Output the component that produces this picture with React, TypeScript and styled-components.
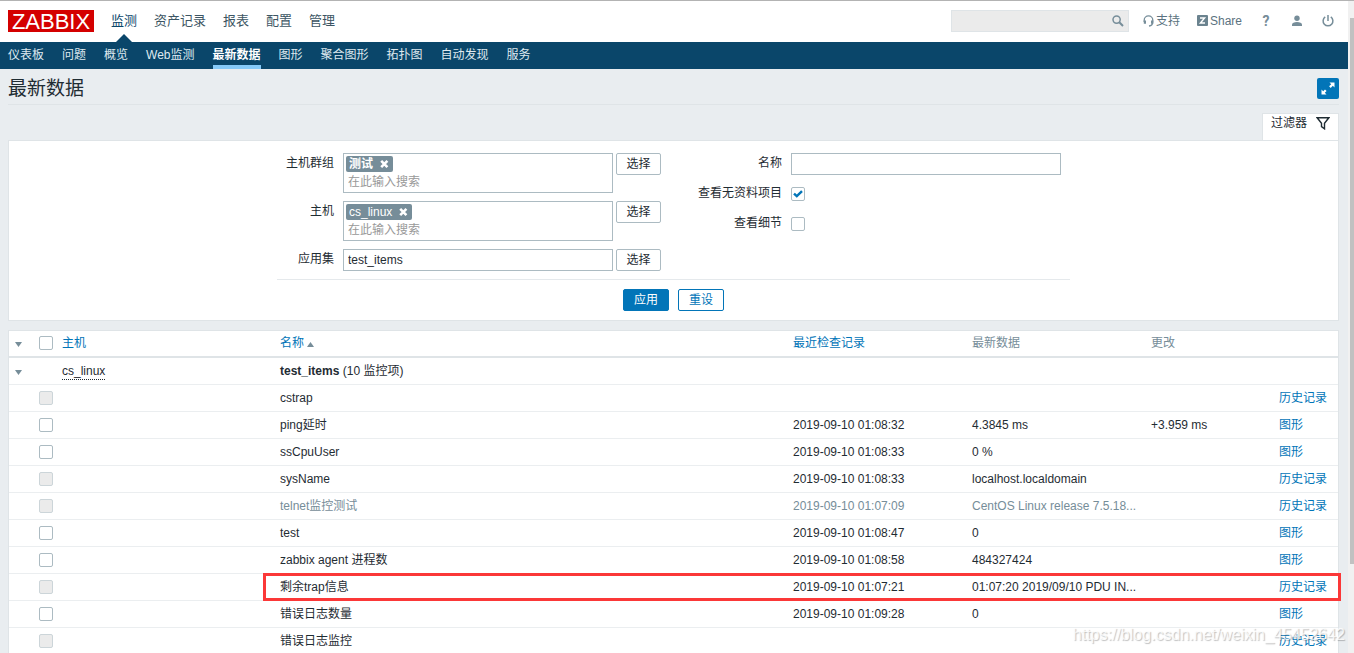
import React from 'react';
import styled, { createGlobalStyle, css } from 'styled-components';

const GlobalStyle = createGlobalStyle`
  *, *::before, *::after { box-sizing: border-box; }
  body {
    margin: 0;
    background: #e9edf0;
    color: #1f2c33;
    font-family: "Liberation Sans", "Noto Sans CJK SC", sans-serif;
    font-size: 12px;
    line-height: 18px;
  }
  a { color: #0275b8; text-decoration: none; }
  button, input { font: inherit; color: inherit; margin: 0; }
  ul { margin: 0; padding: 0; list-style: none; }
  svg { display: block; }
`;

const Shell = styled.div`
  position: relative;
  display: flex;
  height: 100vh;
  overflow: hidden;
  border-top: 1px solid #b3b3b3;
`;

const Page = styled.div`
  flex: 1;
  min-width: 0;
`;

const ScrollTrack = styled.div`
  display: flex;
  flex-direction: column;
  width: 6px;
  padding: 17px 0 0 2px;
  background: #f1f1f1;
`;

const ScrollThumb = styled.div`
  height: 86%;
  background: #c1c1c1;
`;

const Header = styled.header`
  display: flex;
  align-items: center;
  justify-content: space-between;
  height: 41px;
  padding: 0 13px 2px 8px;
  background: #fff;
`;

const HeaderGroup = styled.div<{ $gap: number }>`
  display: flex;
  align-items: center;
  gap: ${(p) => p.$gap}px;
`;

const Logo = styled.a`
  width: 86px;
  height: 22px;
  background: #d40000;
  color: #fff;
  font-size: 22px;
  line-height: 23px;
  text-align: center;
`;

const TopMenu = styled.ul`
  display: flex;
  gap: 17px;
`;

const TopLink = styled.a<{ $active?: boolean }>`
  position: relative;
  display: block;
  color: ${(p) => (p.$active ? '#0a466a' : '#3c5563')};
  font-size: 13px;
  line-height: 39px;
  ${(p) =>
    p.$active &&
    css`
      &::after {
        content: '';
        position: absolute;
        left: 50%;
        bottom: -2px;
        margin-left: -8px;
        border: 8px solid transparent;
        border-top: 0;
        border-bottom-color: #0a466a;
      }
    `}
`;

const SearchBox = styled.form`
  display: flex;
  align-items: center;
  width: 178px;
  height: 22px;
  padding: 0 4px;
  background: #ebebeb;
  border: 1px solid #dfe4e7;
`;

const SearchInput = styled.input`
  flex: 1;
  min-width: 0;
  padding: 0;
  border: 0;
  background: none;
  outline: none;
`;

const PlainButton = styled.button`
  padding: 0;
  border: 0;
  background: none;
  cursor: pointer;
`;

const Tools = styled.nav`
  display: flex;
  align-items: center;
  gap: 17px;
`;

const ToolLink = styled.a`
  display: flex;
  align-items: center;
  justify-content: center;
  gap: 2px;
  min-width: 14px;
  color: #5b7280;
`;

const HelpMark = styled.span`
  color: #768d99;
  font-family: Roboto, sans-serif;
  font-size: 14px;
  font-weight: 700;
`;

const SubNav = styled.nav`
  background: #0a466a;
`;

const SubMenu = styled.ul`
  display: flex;
  gap: 18px;
  padding: 0 8px;
`;

const SubLink = styled.a<{ $active?: boolean }>`
  display: block;
  height: 27px;
  border-bottom: 4px solid ${(p) => (p.$active ? '#86caf9' : 'transparent')};
  color: ${(p) => (p.$active ? '#fff' : '#dfe9ef')};
  font-weight: ${(p) => (p.$active ? 700 : 400)};
  line-height: 26px;
`;

const Content = styled.main`
  padding: 0 9px 10px 8px;
`;

const TitleBar = styled.div`
  display: flex;
  align-items: center;
  justify-content: space-between;
  height: 36px;
  padding-top: 4px;
  border-bottom: 1px solid #dfe4e7;
`;

const Title = styled.h1`
  margin: 0;
  font-size: 19px;
  font-weight: 400;
  line-height: 24px;
`;

const FullscreenButton = styled.button`
  display: flex;
  align-items: center;
  justify-content: center;
  width: 22px;
  height: 21px;
  padding: 0;
  border: 0;
  border-radius: 2px;
  background: #0275b8;
`;

const FilterTabs = styled.div`
  display: flex;
  justify-content: flex-end;
  padding-top: 8px;
`;

const FilterTab = styled.button`
  display: flex;
  gap: 9px;
  height: 27px;
  padding: 0 8px;
  border: 1px solid #dfe4e7;
  border-bottom: 0;
  background: #fff;
  line-height: 18px;
  svg { margin-top: 3px; }
`;

const FilterPanel = styled.form`
  display: flex;
  flex-direction: column;
  align-items: center;
  padding: 12px 0 9px;
  border: 1px solid #dfe4e7;
  background: #fff;
`;

const FilterColumns = styled.div`
  display: flex;
  gap: 37px;
  padding: 0 9px 8px;
  border-bottom: 1px solid #e5e9ec;
`;

const FilterColumn = styled.div`
  display: flex;
  flex-direction: column;
  gap: 8px;
`;

const FieldRow = styled.div<{ $label: number }>`
  display: grid;
  grid-template-columns: ${(p) => p.$label}px 279px auto;
  align-items: start;
  min-height: 22px;
`;

const FieldLabel = styled.label`
  line-height: 20px;
  text-align: right;
`;

const FieldControl = styled.div`
  padding-left: 9px;
`;

const TextInput = styled.input`
  display: block;
  width: 100%;
  height: 22px;
  padding: 0 4px;
  border: 1px solid #acbbc2;
  background: #fff;
  outline: none;
`;

const MultiSelect = styled.div`
  display: flex;
  flex-direction: column;
  align-items: flex-start;
  height: 40px;
  padding: 2px;
  border: 1px solid #acbbc2;
`;

const Token = styled.span`
  display: flex;
  align-items: center;
  gap: 7px;
  height: 16px;
  padding: 0 4px 0 3px;
  border-radius: 2px;
  background: #768d99;
  color: #fff;
  line-height: 16px;
`;

const TokenInput = styled.input`
  width: 100%;
  height: 20px;
  padding: 1px 2px 0;
  border: 0;
  background: none;
  outline: none;
  &::placeholder { color: #999; opacity: 1; }
`;

const Button = styled.button<{ $kind?: 'primary' | 'outline' }>`
  height: 22px;
  padding: 0 10px;
  border: 1px solid #acbbc2;
  border-radius: 2px;
  background: #fff;
  line-height: 20px;
  ${(p) => p.$kind && css`border-color: #0275b8; color: #0275b8;`}
  ${(p) => p.$kind === 'primary' && css`background: #0275b8; color: #fff;`}
`;

const SelectButton = styled(Button)`
  width: 45px;
  margin-left: 3px;
  padding: 0;
`;

const FilterActions = styled.div`
  display: flex;
  gap: 9px;
  padding-top: 9px;
`;

const CheckWrap = styled.span`
  position: relative;
  display: block;
  width: 14px;
  height: 14px;
  svg { position: absolute; left: 2px; top: 3px; pointer-events: none; }
`;

const CheckInput = styled.input`
  appearance: none;
  display: block;
  width: 14px;
  height: 14px;
  border: 1px solid #acbbc2;
  border-radius: 2px;
  background: #fff;
  &:disabled { border-color: #ccd5d9; background: #ebebeb; }
`;

const CheckSlot = styled.div`
  padding: 4px 0 0 9px;
`;

const DataTable = styled.table`
  width: 100%;
  margin-top: 9px;
  table-layout: fixed;
  border-collapse: separate;
  border-spacing: 0;
  border: 1px solid #dfe4e7;
  background: #fff;
`;

const HeadCell = styled.th`
  height: 27px;
  padding: 0 5px 1px;
  border-bottom: 2px solid #dfe4e7;
  color: #768d99;
  font-weight: 400;
  text-align: left;
  &:first-child { padding-left: 6px; }
`;

const Cell = styled.td`
  height: 27px;
  padding: 0 5px;
  border-bottom: 1px solid #ebeef0;
  white-space: nowrap;
  &:first-child { padding-left: 6px; }
`;

const Row = styled.tr<{ $muted?: boolean }>`
  position: relative;
  color: ${(p) => (p.$muted ? '#768d99' : 'inherit')};
`;

const Highlight = styled.span`
  position: absolute;
  left: 254px;
  right: -3px;
  top: -1px;
  height: 28px;
  border: 3px solid #fb3838;
  pointer-events: none;
`;

const SortLink = styled.a`
  display: flex;
  align-items: center;
  gap: 3px;
  svg { margin-top: 3px; }
`;

const HostLink = styled.a`
  display: inline-block;
  border-bottom: 1px dotted #1f2c33;
  color: #1f2c33;
  line-height: 15px;
`;

const Watermark = styled.div`
  position: absolute;
  right: 9px;
  bottom: 8px;
  color: rgba(255, 255, 255, 0.8);
  font-size: 16px;
  line-height: 20px;
  text-shadow: 1px 1px 1px rgba(0, 0, 0, 0.25);
  pointer-events: none;
`;

const Triangle = ({ up }: { up?: boolean }) => (
  <svg width="7" height="5" viewBox="0 0 7 5" fill="#768d99">
    <path d={up ? 'M0 5 3.5 0 7 5z' : 'M0 0h7L3.5 5z'} />
  </svg>
);

const CrossIcon = () => (
  <svg width="9" height="8" viewBox="0 0 9 8" stroke="#fff" strokeWidth="2.6">
    <path d="M1.2.9l6.2 6.2M7.4.9 1.2 7.1" />
  </svg>
);

const SearchIcon = () => (
  <svg width="12" height="12" viewBox="0 0 12 12" fill="none" stroke="#768d99">
    <circle cx="4.6" cy="4.6" r="3.6" strokeWidth="1.5" />
    <path d="M7.3 7.3 11 11" strokeWidth="2" />
  </svg>
);

const HeadsetIcon = () => (
  <svg width="11" height="12" viewBox="0 0 11 12" fill="none" stroke="#768d99">
    <path d="M1.2 7V5.2a4.3 4.3 0 0 1 8.6 0V7c0 2.4-1.3 3.7-3.8 4" strokeWidth="1.3" />
    <path d="M1.9 5.5v3.2M9.1 5.5v3.2" strokeWidth="2.2" />
  </svg>
);

const ShareIcon = () => (
  <svg width="11" height="11" viewBox="0 0 11 11">
    <rect width="11" height="11" rx="1" fill="#6b838f" />
    <path d="M3 3h4.6L3.4 8H8" fill="none" stroke="#fff" strokeWidth="1.4" />
  </svg>
);

const UserIcon = () => (
  <svg width="12" height="12" viewBox="0 0 12 12" fill="#768d99">
    <circle cx="6" cy="3.2" r="2.7" />
    <path d="M1 11V9.6C1 7.9 3.2 7 6 7s5 .9 5 2.6V11z" />
  </svg>
);

const PowerIcon = () => (
  <svg width="12" height="12" viewBox="0 0 12 12" fill="none" stroke="#768d99" strokeWidth="1.5">
    <path d="M6 0v6M3.2 1.9a4.9 4.9 0 1 0 5.6 0" />
  </svg>
);

const ExpandIcon = () => (
  <svg width="14" height="13" viewBox="0 0 14 13" fill="#fff">
    <path d="M8.5.5h5v5L11.8 3.8 9.7 5.9 8.1 4.3 10.2 2.2z" />
    <path d="M.5 7.5 2.2 9.2 4 7.4 5.6 9 3.8 10.8 5.5 12.5h-5z" />
  </svg>
);

const FunnelIcon = () => (
  <svg width="14" height="13" viewBox="0 0 14 13" fill="none" stroke="#1f2c33" strokeWidth="1.4">
    <path d="M1.2.8h11.6L8.5 6.2v5.6L5.5 9.6V6.2z" />
  </svg>
);

interface CheckProps {
  id?: string;
  label?: string;
  checked?: boolean;
  disabled?: boolean;
}

const Check = ({ id, label, checked, disabled }: CheckProps) => {
  const [on, setOn] = React.useState(Boolean(checked));
  return (
    <CheckWrap>
      <CheckInput
        type="checkbox"
        id={id}
        aria-label={label}
        checked={on}
        disabled={disabled}
        onChange={(e) => setOn(e.target.checked)}
      />
      {on && (
        <svg width="10" height="8" viewBox="0 0 10 8" fill="none" stroke="#0275b8" strokeWidth="2.4">
          <path d="M1 3.6 3.8 6.2 9 1.2" />
        </svg>
      )}
    </CheckWrap>
  );
};

const topMenu = ['监测', '资产记录', '报表', '配置', '管理'];
const subMenu = ['仪表板', '问题', '概览', 'Web监测', '最新数据', '图形', '聚合图形', '拓扑图', '自动发现', '服务'];

interface Item {
  name: string;
  time?: string;
  value?: string;
  change?: string;
  graph?: boolean;
  muted?: boolean;
  marked?: boolean;
}

const items: Item[] = [
  { name: 'cstrap' },
  { name: 'ping延时', time: '2019-09-10 01:08:32', value: '4.3845 ms', change: '+3.959 ms', graph: true },
  { name: 'ssCpuUser', time: '2019-09-10 01:08:33', value: '0 %', graph: true },
  { name: 'sysName', time: '2019-09-10 01:08:33', value: 'localhost.localdomain' },
  { name: 'telnet监控测试', time: '2019-09-10 01:07:09', value: 'CentOS Linux release 7.5.18...', muted: true },
  { name: 'test', time: '2019-09-10 01:08:47', value: '0', graph: true },
  { name: 'zabbix agent 进程数', time: '2019-09-10 01:08:58', value: '484327424', graph: true },
  { name: '剩余trap信息', time: '2019-09-10 01:07:21', value: '01:07:20 2019/09/10 PDU IN...', marked: true },
  { name: '错误日志数量', time: '2019-09-10 01:09:28', value: '0', graph: true },
  { name: '错误日志监控' },
];

export default function App() {
  return (
    <>
      <GlobalStyle />
      <Shell>
        <Page>
          <Header>
            <HeaderGroup $gap={17}>
              <Logo href="#">ZABBIX</Logo>
              <TopMenu>
                {topMenu.map((name, i) => (
                  <li key={name}>
                    <TopLink href="#" $active={i === 0}>{name}</TopLink>
                  </li>
                ))}
              </TopMenu>
            </HeaderGroup>
            <HeaderGroup $gap={14}>
              <SearchBox onSubmit={(e) => e.preventDefault()}>
                <SearchInput type="text" aria-label="搜索" />
                <PlainButton type="submit" aria-label="搜索"><SearchIcon /></PlainButton>
              </SearchBox>
              <Tools>
                <ToolLink href="#"><HeadsetIcon />支持</ToolLink>
                <ToolLink href="#"><ShareIcon />Share</ToolLink>
                <ToolLink href="#"><HelpMark>?</HelpMark></ToolLink>
                <ToolLink href="#" aria-label="用户"><UserIcon /></ToolLink>
                <ToolLink href="#" aria-label="退出"><PowerIcon /></ToolLink>
              </Tools>
            </HeaderGroup>
          </Header>
          <SubNav>
            <SubMenu>
              {subMenu.map((name) => (
                <li key={name}>
                  <SubLink href="#" $active={name === '最新数据'}>{name}</SubLink>
                </li>
              ))}
            </SubMenu>
          </SubNav>
          <Content>
            <TitleBar>
              <Title>最新数据</Title>
              <FullscreenButton type="button" aria-label="全屏"><ExpandIcon /></FullscreenButton>
            </TitleBar>
            <FilterTabs>
              <FilterTab type="button">过滤器<FunnelIcon /></FilterTab>
            </FilterTabs>
            <FilterPanel onSubmit={(e) => e.preventDefault()}>
              <FilterColumns>
                <FilterColumn>
                  <FieldRow $label={48}>
                    <FieldLabel htmlFor="groups">主机群组</FieldLabel>
                    <FieldControl>
                      <MultiSelect>
                        <Token><b>测试</b><PlainButton type="button" aria-label="移除"><CrossIcon /></PlainButton></Token>
                        <TokenInput id="groups" placeholder="在此输入搜索" />
                      </MultiSelect>
                    </FieldControl>
                    <SelectButton type="button">选择</SelectButton>
                  </FieldRow>
                  <FieldRow $label={48}>
                    <FieldLabel htmlFor="hosts">主机</FieldLabel>
                    <FieldControl>
                      <MultiSelect>
                        <Token>cs_linux<PlainButton type="button" aria-label="移除"><CrossIcon /></PlainButton></Token>
                        <TokenInput id="hosts" placeholder="在此输入搜索" />
                      </MultiSelect>
                    </FieldControl>
                    <SelectButton type="button">选择</SelectButton>
                  </FieldRow>
                  <FieldRow $label={48}>
                    <FieldLabel htmlFor="application">应用集</FieldLabel>
                    <FieldControl>
                      <TextInput id="application" defaultValue="test_items" />
                    </FieldControl>
                    <SelectButton type="button">选择</SelectButton>
                  </FieldRow>
                </FilterColumn>
                <FilterColumn>
                  <FieldRow $label={84}>
                    <FieldLabel htmlFor="name">名称</FieldLabel>
                    <FieldControl><TextInput id="name" /></FieldControl>
                  </FieldRow>
                  <FieldRow $label={84}>
                    <FieldLabel htmlFor="without-data">查看无资料项目</FieldLabel>
                    <CheckSlot><Check id="without-data" checked /></CheckSlot>
                  </FieldRow>
                  <FieldRow $label={84}>
                    <FieldLabel htmlFor="details">查看细节</FieldLabel>
                    <CheckSlot><Check id="details" /></CheckSlot>
                  </FieldRow>
                </FilterColumn>
              </FilterColumns>
              <FilterActions>
                <Button type="submit" $kind="primary">应用</Button>
                <Button type="reset" $kind="outline">重设</Button>
              </FilterActions>
            </FilterPanel>
            <DataTable>
              <colgroup>
                <col width="25" />
                <col width="23" />
                <col width="218" />
                <col />
                <col width="179" />
                <col width="179" />
                <col width="128" />
                <col width="64" />
              </colgroup>
              <thead>
                <tr>
                  <HeadCell><PlainButton type="button" aria-label="折叠全部"><Triangle /></PlainButton></HeadCell>
                  <HeadCell><Check label="全选" /></HeadCell>
                  <HeadCell><a href="#">主机</a></HeadCell>
                  <HeadCell><SortLink href="#">名称<Triangle up /></SortLink></HeadCell>
                  <HeadCell><a href="#">最近检查记录</a></HeadCell>
                  <HeadCell>最新数据</HeadCell>
                  <HeadCell>更改</HeadCell>
                  <HeadCell />
                </tr>
              </thead>
              <tbody>
                <Row>
                  <Cell><PlainButton type="button" aria-label="折叠"><Triangle /></PlainButton></Cell>
                  <Cell />
                  <Cell><HostLink href="#">cs_linux</HostLink></Cell>
                  <Cell colSpan={5}><b>test_items</b> (10 监控项)</Cell>
                </Row>
                {items.map((item) => (
                  <Row key={item.name} $muted={item.muted}>
                    <Cell />
                    <Cell><Check label={item.name} disabled={!item.graph} /></Cell>
                    <Cell />
                    <Cell>{item.name}{item.marked && <Highlight />}</Cell>
                    <Cell>{item.time}</Cell>
                    <Cell>{item.value}</Cell>
                    <Cell>{item.change}</Cell>
                    <Cell><a href="#">{item.graph ? '图形' : '历史记录'}</a></Cell>
                  </Row>
                ))}
              </tbody>
            </DataTable>
          </Content>
        </Page>
        <ScrollTrack><ScrollThumb /></ScrollTrack>
        <Watermark>https://blog.csdn.net/weixin_45452642</Watermark>
      </Shell>
    </>
  );
}
